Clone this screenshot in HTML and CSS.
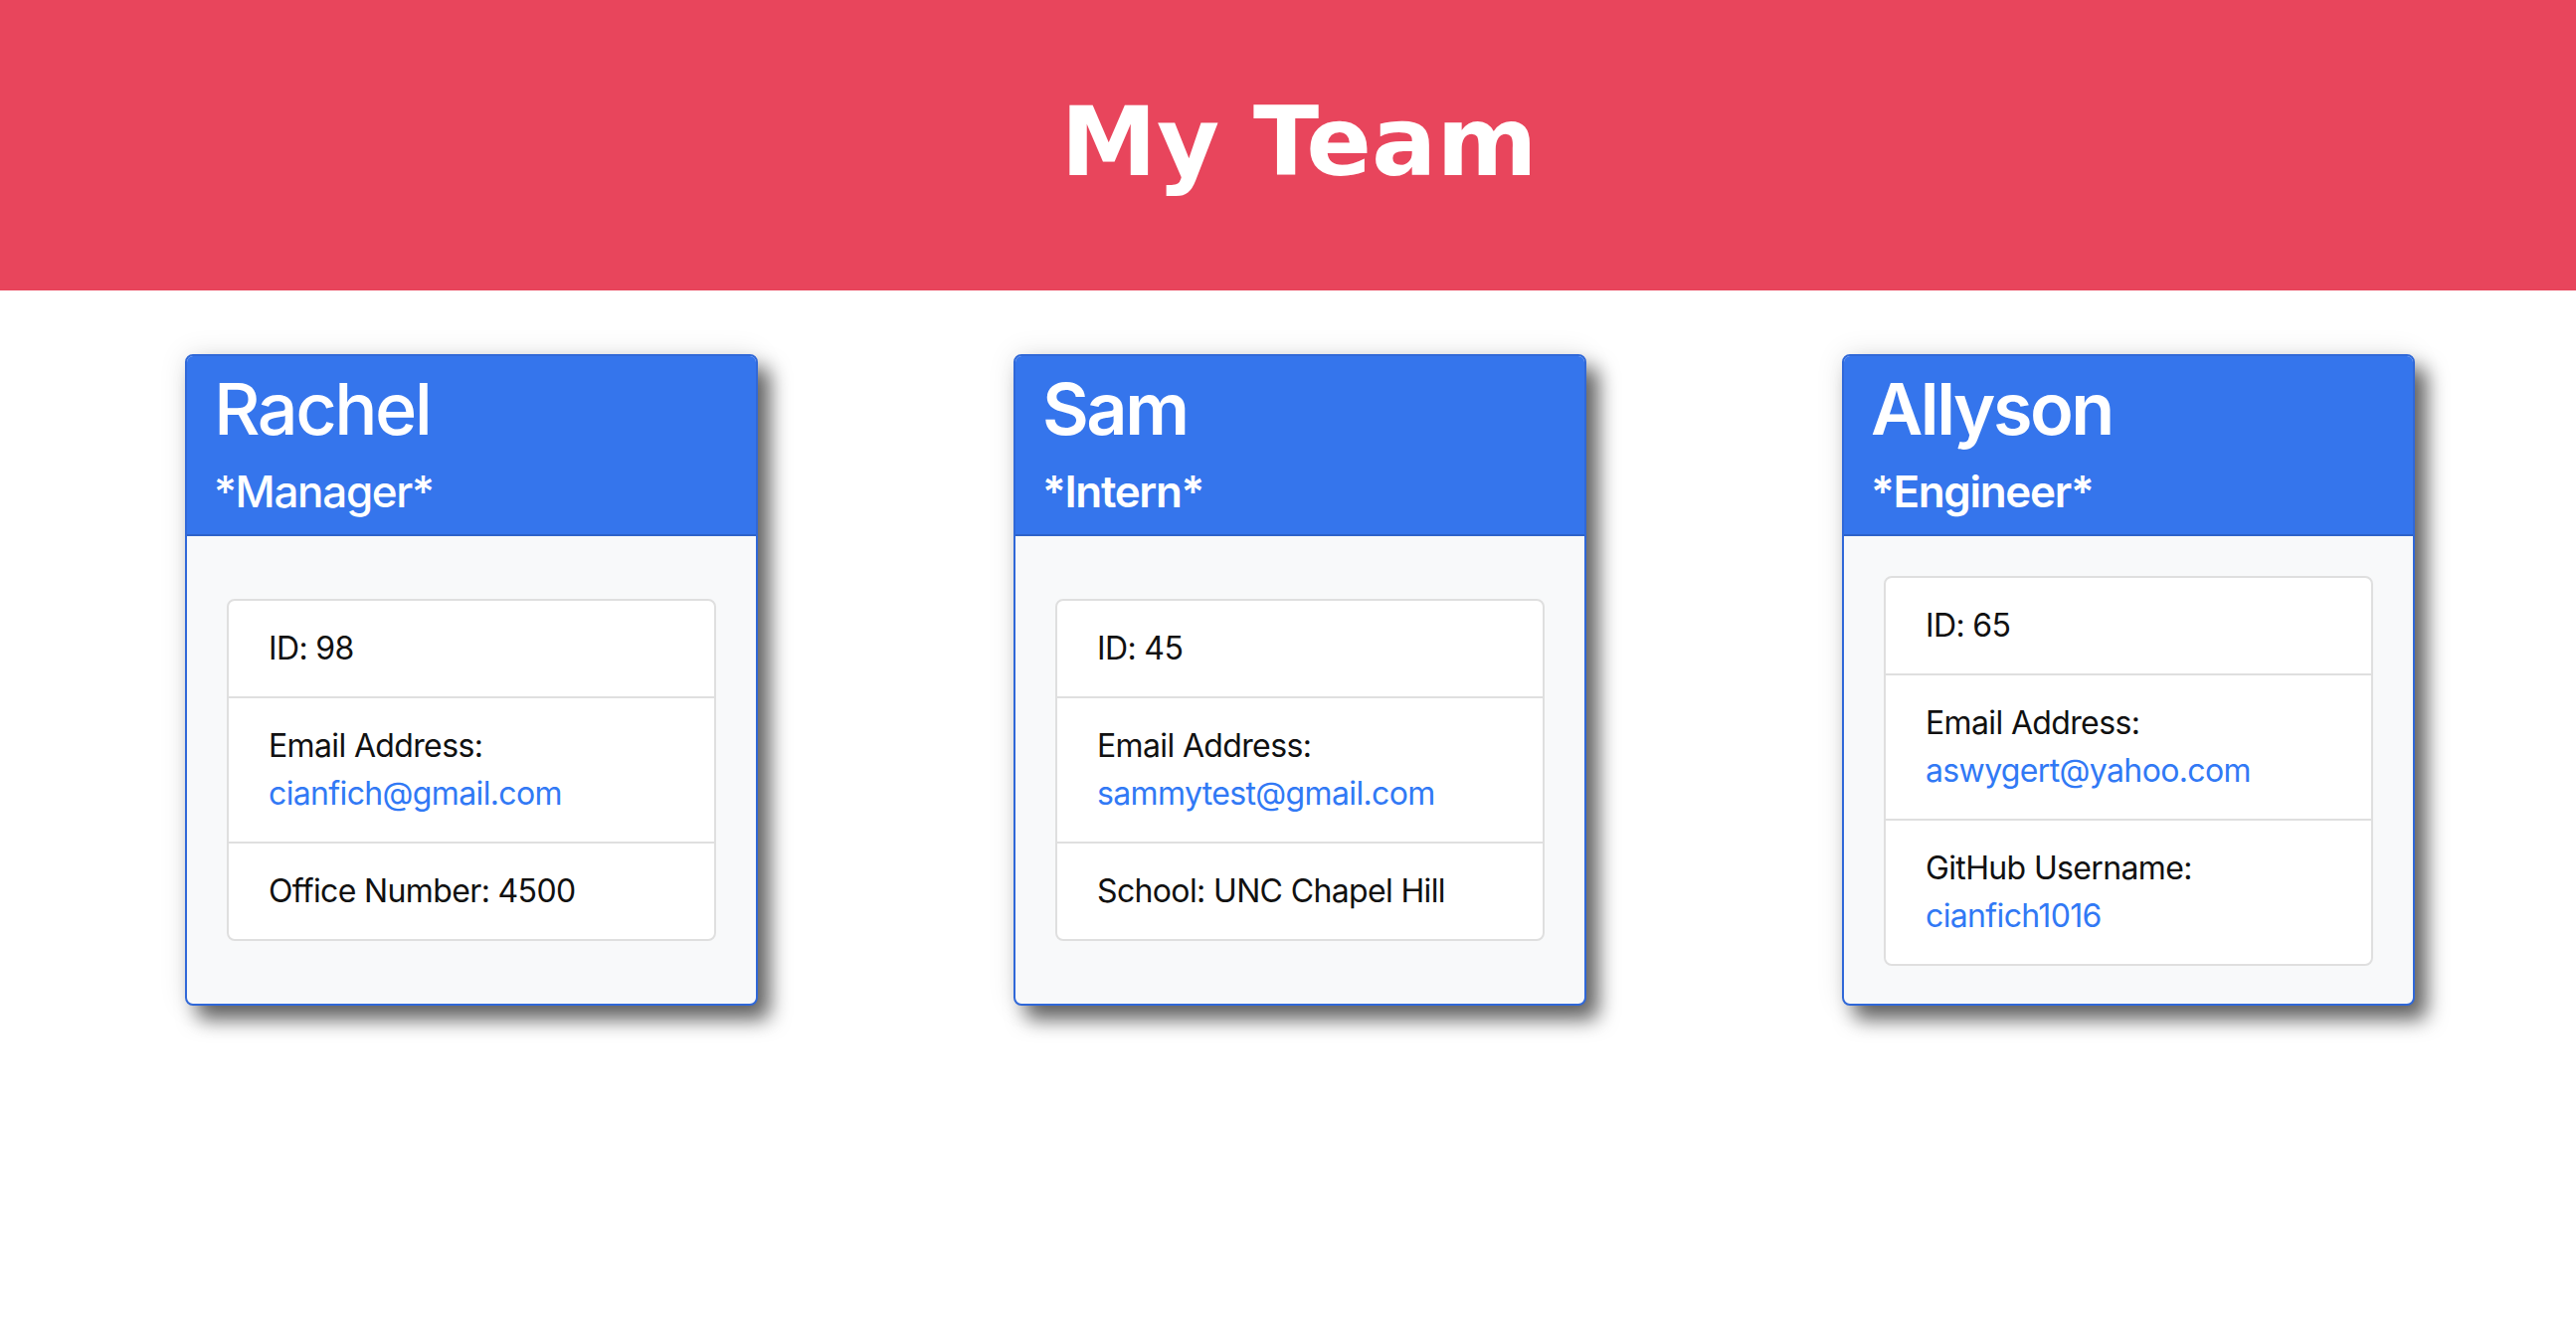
FILE: index.html
```html
<!DOCTYPE html>
<html lang="en">
<head>
<meta charset="utf-8">
<title>My Team</title>
<link rel="stylesheet" href="styles.css">
</head>
<body>
<header class="banner">
  <h1 class="banner-title">My Team</h1>
</header>
<main class="team">
  <section class="card">
    <div class="card-header">
      <h2 class="card-name">Rachel</h2>
      <h3 class="card-role">*Manager*</h3>
    </div>
    <div class="card-body">
      <ul class="info-list">
        <li class="info-item">ID: 98</li>
        <li class="info-item">Email Address: <a class="info-link" href="#">cianfich@gmail.com</a></li>
        <li class="info-item">Office Number: 4500</li>
      </ul>
    </div>
  </section>
  <section class="card card-strong">
    <div class="card-header">
      <h2 class="card-name">Sam</h2>
      <h3 class="card-role">*Intern*</h3>
    </div>
    <div class="card-body">
      <ul class="info-list">
        <li class="info-item">ID: 45</li>
        <li class="info-item">Email Address: <a class="info-link" href="#">sammytest@gmail.com</a></li>
        <li class="info-item">School: UNC Chapel Hill</li>
      </ul>
    </div>
  </section>
  <section class="card card-strong">
    <div class="card-header">
      <h2 class="card-name">Allyson</h2>
      <h3 class="card-role">*Engineer*</h3>
    </div>
    <div class="card-body">
      <ul class="info-list">
        <li class="info-item">ID: 65</li>
        <li class="info-item">Email Address: <a class="info-link" href="#">aswygert@yahoo.com</a></li>
        <li class="info-item">GitHub Username: <a class="info-link" href="#">cianfich1016</a></li>
      </ul>
    </div>
  </section>
</main>
</body>
</html>
```
FILE: styles.css
```css
* {
  box-sizing: border-box;
}

html, body {
  margin: 0;
  padding: 0;
  background: #ffffff;
}

body {
  font-family: Inter, "Liberation Sans", Arial, sans-serif;
  color: #111111;
  min-height: 1328px;
}

.banner {
  background: #e8455c;
  height: 292px;
  padding: 93px 0 0 22px;
  text-align: center;
}

.banner-title {
  margin: 0;
  font-family: "DejaVu Sans", Verdana, sans-serif;
  font-weight: 700;
  font-size: 97px;
  line-height: 100px;
  color: #ffffff;
}

.team {
  display: flex;
  align-items: flex-start;
  gap: 257px;
  padding: 64px 0 120px 186px;
}

.card {
  width: 576px;
  height: 655px;
  display: flex;
  flex-direction: column;
  border: 2px solid #3068d8;
  border-radius: 8px;
  background: #f8f9fa;
  box-shadow: 12px 14px 20px rgba(0, 0, 0, 0.6), 0 0 28px rgba(0, 0, 0, 0.10);
  overflow: hidden;
}

.card-header {
  background: #3575ec;
  border-bottom: 2px solid #2d63c9;
  padding: 13px 26px 17px 27px;
  color: #ffffff;
}

.card-name {
  margin: 0;
  font-size: 72px;
  line-height: 80px;
  font-weight: 500;
  letter-spacing: -0.035em;
}

.card-role {
  margin: 17px 0 0 0;
  font-size: 44px;
  line-height: 52px;
  font-weight: 500;
  letter-spacing: -0.03em;
}

.card-strong .card-name,
.card-strong .card-role {
  font-weight: 600;
}

.card-body {
  flex: 1;
  display: flex;
  flex-direction: column;
  justify-content: center;
  padding: 40px;
}

.info-list {
  list-style: none;
  margin: 0;
  padding: 0;
  background: #ffffff;
  border: 2px solid #dfdfdf;
  border-radius: 8px;
}

.info-item {
  padding: 24px 40px;
  font-size: 32px;
  line-height: 48px;
  letter-spacing: -0.02em;
}

.info-item + .info-item {
  border-top: 2px solid #dfdfdf;
}

.info-link {
  color: #3179f5;
  text-decoration: none;
}
```
